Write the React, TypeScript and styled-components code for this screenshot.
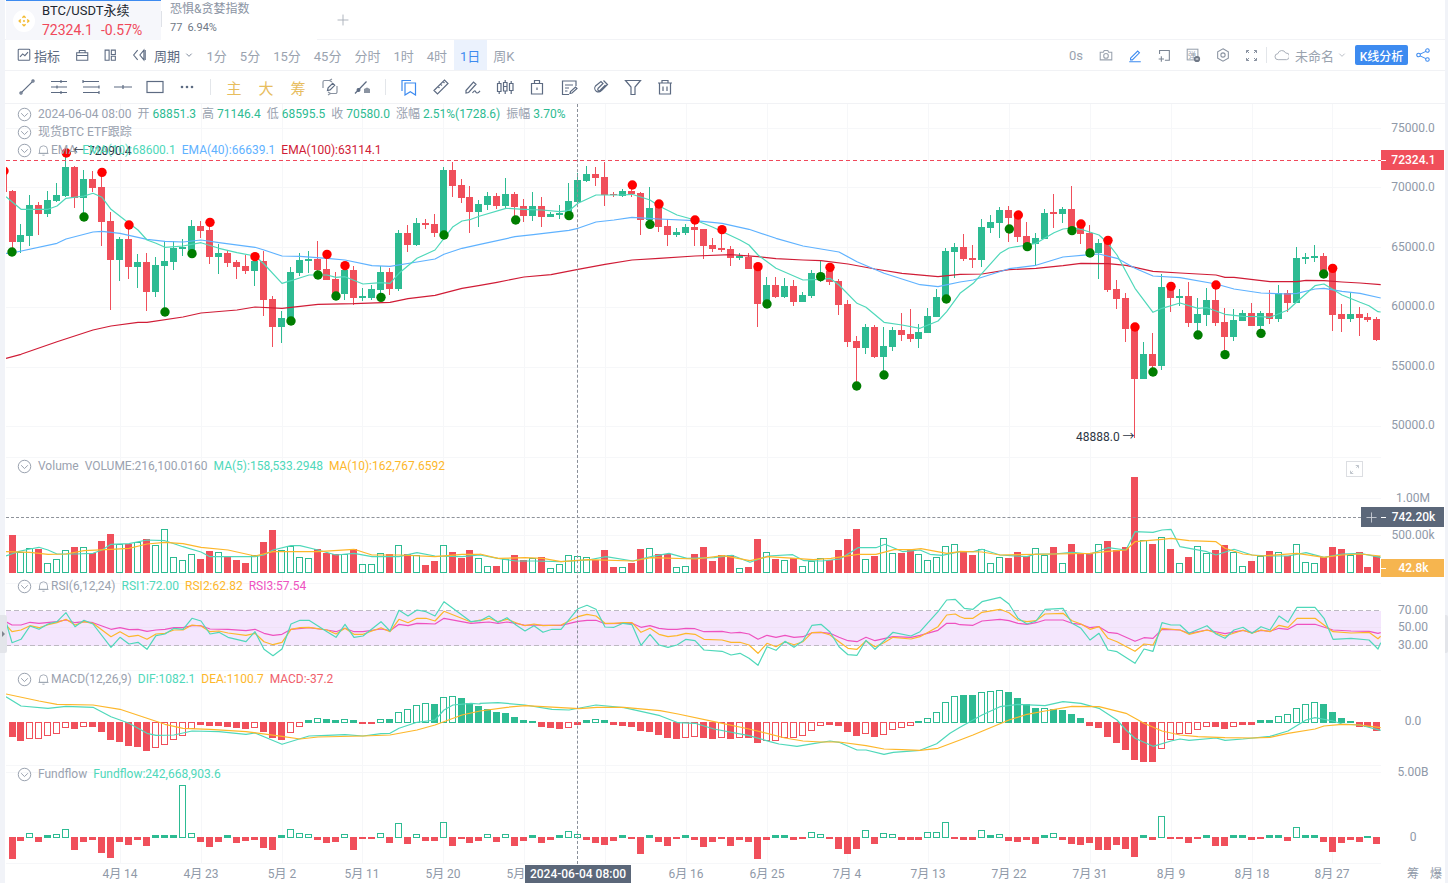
import React from 'react'
import styled, { createGlobalStyle } from 'styled-components'

const FONT = `Roboto, "Noto Sans CJK SC", sans-serif`
const RED = '#f04f5b'
const GREEN = '#2dbb92'
const TEAL = '#4fd8ba'
const ORANGE = '#fdb72b'
const PINK = '#ee52c0'
const BLUE = '#5fb2ff'
const WINE = '#d01c36'
const SLATE = '#5b6779'
const GRID = '#f6f7f9'

const GlobalStyle = createGlobalStyle`
  html, body { margin: 0; padding: 0; background: #fff; overflow: hidden; }
  body { font-family: ${FONT}; }
`

const Page = styled.div`
  display: flex;
  width: 1448px;
  height: 883px;
  overflow: hidden;
`

const Gutter = styled.div<{ $w: number }>`
  position: relative;
  flex: 0 0 ${p => p.$w}px;
  background: #f1f3f8;
`

const Handle = styled.div<{ $left: boolean }>`
  position: absolute;
  z-index: 3;
  top: 615px;
  ${p => (p.$left ? 'left: 0;' : 'right: 0;')}
  width: ${p => (p.$left ? 7 : 3)}px;
  height: 38px;
  background: #e3e5ea;
  border-radius: 0 2px 2px 0;
  display: flex;
  align-items: center;
  justify-content: center;
  &::after {
    content: '';
    display: ${p => (p.$left ? 'block' : 'none')};
    border-left: 3px solid #80858f;
    border-top: 3px solid transparent;
    border-bottom: 3px solid transparent;
  }
`

const Main = styled.div`
  flex: 1;
  min-width: 0;
  display: flex;
  flex-direction: column;
`

/* top tabs */
const Tabs = styled.div`
  display: flex;
  height: 40px;
  box-sizing: border-box;
  border-bottom: 1px solid #f2f3f6;
`

const ActiveTab = styled.div`
  margin-left: 1px;
  width: 155px;
  height: 40px;
  box-sizing: border-box;
  border-top: 1px solid #3d8bf0;
  background: #f6f7fb;
  display: flex;
  align-items: center;
  gap: 7px;
  padding-left: 7px;
`

const CoinLogo = styled.div`
  width: 22px;
  height: 22px;
  border-radius: 50%;
  background: #fff;
  display: flex;
  align-items: center;
  justify-content: center;
`

const TabText = styled.div`
  display: flex;
  flex-direction: column;
  margin-top: -1px;
`

const TabName = styled.div`
  font-size: 13px;
  line-height: 20px;
  color: #222831;
`

const TabPrice = styled.div`
  display: flex;
  gap: 8px;
  font-size: 14px;
  line-height: 18px;
  color: #f0485a;
`

const IndexTab = styled.div`
  width: 156px;
  padding: 1px 0 0 9px;
  box-sizing: border-box;
  background: #fff;
  margin-bottom: -1px;
  position: relative;
  &::before {
    content: '';
    position: absolute;
    left: 0;
    top: 11px;
    width: 1px;
    height: 16px;
    background: #dfe2e8;
  }
`

const IndexName = styled.div`
  font-size: 12px;
  line-height: 17px;
  color: #8b94a3;
`

const IndexValue = styled.div`
  display: flex;
  gap: 5px;
  margin-top: 1px;
  font-size: 11px;
  line-height: 18px;
  color: #6f7886;
`

const AddTab = styled.div`
  margin-left: 19px;
  width: 14px;
  height: 39px;
  display: flex;
  align-items: center;
`

/* toolbars */
const Toolbar = styled.div<{ $h: number }>`
  display: flex;
  align-items: center;
  height: ${p => p.$h}px;
  box-sizing: border-box;
  border-bottom: 1px solid #f1f2f5;
  background: #fff;
  padding-left: 6px;
`

const ToolText = styled.span<{ $dark?: boolean }>`
  font-size: 13px;
  color: ${p => (p.$dark ? '#5d6b82' : '#9aa3af')};
  white-space: nowrap;
`

const Period = styled.div<{ $on?: boolean }>`
  height: 30px;
  display: flex;
  align-items: center;
  padding: 0 6.5px;
  font-size: 13px;
  color: ${p => (p.$on ? '#3d8bf0' : '#9aa3af')};
  background: ${p => (p.$on ? '#ebf2fd' : 'transparent')};
`

const ToolSlot = styled.div<{ $w: number; $ml?: number }>`
  flex: 0 0 ${p => p.$w}px;
  margin-left: ${p => p.$ml || 0}px;
  display: flex;
  align-items: center;
  justify-content: center;
  height: 100%;
`

const ToolSep = styled.div<{ $w: number }>`
  flex: 0 0 1px;
  height: 16px;
  margin: 0 ${p => p.$w}px;
  background: #e3e6ea;
`

const Spacer = styled.div`
  flex: 1;
`

const AnalysisButton = styled.div`
  width: 53px;
  height: 20px;
  margin-left: 6px;
  border-radius: 2px;
  background: #3d8bf0;
  color: #fff;
  font-size: 12px;
  font-weight: 500;
  display: flex;
  align-items: center;
  justify-content: center;
`

const GoldMark = styled.span`
  font-size: 15px;
  color: #e7bd5e;
`

/* chart */
const ChartArea = styled.div`
  position: relative;
  flex: 1;
  min-height: 0;
`

const Pane = styled.div<{ $h: number }>`
  position: relative;
  height: ${p => p.$h}px;
`

const PaneSvg = styled.svg`
  display: block;
  width: 1440px;
  height: 100%;
`

const AxisLabel = styled.text`
  font-family: ${FONT};
  font-size: 12px;
  fill: #8f99a8;
  text-anchor: middle;
  dominant-baseline: central;
`

const LowLabel = styled.text`
  font-family: ${FONT};
  font-size: 12px;
  fill: #2d3644;
  dominant-baseline: central;
`

const Legend = styled.div`
  position: absolute;
  z-index: 1;
  top: 0;
  left: 12px;
  display: flex;
  flex-direction: column;
`

const LegendTop = styled(Legend)`
  top: 1px;
`

const LegendRow = styled.div`
  display: flex;
  align-items: center;
  height: 18px;
  gap: 6px;
  font-size: 12px;
  line-height: 18px;
  color: #9aa2af;
  white-space: nowrap;
`

const BellLabel = styled.span`
  display: flex;
  align-items: center;
  gap: 1px;
  margin-left: -1px;
`

const Value = styled.span<{ $c: string }>`
  color: ${p => p.$c};
`

const CrossV = styled.div`
  position: absolute;
  z-index: 2;
  top: 0;
  bottom: 19px;
  left: 572px;
  border-left: 1px dashed #8a8f99;
`

const CrossH = styled.div`
  position: absolute;
  z-index: 2;
  top: 413px;
  left: 1px;
  width: 1375px;
  border-top: 1px dashed #8f939b;
`

const PriceTag = styled.div<{ $top: number; $h: number; $bg: string }>`
  position: absolute;
  z-index: 2;
  top: ${p => p.$top}px;
  left: 1376px;
  width: 63px;
  height: ${p => p.$h}px;
  background: ${p => p.$bg};
  color: #fff;
  font-size: 12px;
  font-weight: 500;
  display: flex;
  align-items: center;
  justify-content: center;
  padding-left: 2px;
  box-sizing: border-box;
  &::before {
    content: '';
    position: absolute;
    left: 0;
    top: 50%;
    width: 5px;
    height: 1px;
    background: #fff;
  }
`

const PlusBox = styled.div`
  position: absolute;
  z-index: 2;
  top: 403px;
  left: 1356px;
  width: 20px;
  height: 20px;
  background: ${SLATE};
  display: flex;
  align-items: center;
  justify-content: center;
`

const ExpandBox = styled.div`
  position: absolute;
  z-index: 2;
  top: 357px;
  left: 1341px;
  width: 17px;
  height: 16px;
  box-sizing: border-box;
  border: 1px solid #dcdee2;
  display: flex;
  align-items: center;
  justify-content: center;
`

const DateTag = styled.div`
  position: absolute;
  z-index: 3;
  bottom: 0;
  left: 520px;
  width: 106px;
  height: 18px;
  background: ${SLATE};
  color: #fff;
  font-size: 12px;
  font-weight: 500;
  display: flex;
  align-items: center;
  justify-content: center;
`

/* icons */
const IconSvg = styled.svg<{ $c: string }>`
  display: block;
  fill: none;
  stroke: ${p => p.$c};
  stroke-width: 1.2;
`

const Icon = ({ d, c = '#5d6b82', s = 18, w = 18 }: { d: React.ReactNode; c?: string; s?: number; w?: number }) => (
  <IconSvg $c={c} width={(s * w) / 18} height={s} viewBox={`0 0 ${w} 18`}>
    {d}
  </IconSvg>
)

const glyphs = {
  indicator: (
    <>
      <rect x="2.5" y="2.5" width="13" height="12.5" rx="1" />
      <path d="M4.5 11l3-3.2 2.5 2 3.5-4" />
    </>
  ),
  calendar: <path d="M3 6.5h12.5v8.5H3zM3 9.5h12.5M6 6.5V4h6.5v2.5" />,
  layout: <path d="M3.5 3.5H8v11.5H3.5zM10.5 3.5H15v5h-4.5zM10.5 10.5H15V15h-4.5z" />,
  rewind: <path d="M7.5 3.5L3 9l4.5 5.5M14.5 3.5L10 9l4.5 5.5zM16 3.5v11" />,
  chevron: <path d="M5 7l4 4 4-4" />,
  camera: (
    <>
      <path d="M2.5 6h3.5l1-2h4l1 2h3.5v8.5h-13z" />
      <circle cx="9" cy="10" r="2.6" />
    </>
  ),
  pen: <path d="M4 12.5L12 4.5l2 2-8 8H4zM2.5 16.5h13" />,
  frame: <path d="M4 8V4h11v11h-5M3 13.5h6M6 10.5v6" />,
  pop: (
    <>
      <rect x="2.5" y="2.5" width="12" height="12" />
      <text x="3.5" y="12" fontSize="9" stroke="none" fill="#9aa3af">
        弹
      </text>
      <circle cx="13.5" cy="13.5" r="3.5" fill="#6f7886" stroke="none" />
      <path d="M12 13.5h3" stroke="#fff" />
    </>
  ),
  hex: (
    <>
      <path d="M9 2l6 3.5v7L9 16l-6-3.5v-7z" />
      <circle cx="9" cy="9" r="2.4" />
    </>
  ),
  full: <path d="M3 6V3h3M3 3l3 3M12 3h3v3M15 3l-3 3M15 12v3h-3M15 15l-3-3M6 15H3v-3M3 15l3-3" />,
  cloud: <path d="M5 14a3.6 3.6 0 01-.4-7.2A5 5 0 0114 6a4 4 0 011 8z" />,
  share: (
    <>
      <circle cx="14" cy="4" r="2" />
      <circle cx="4" cy="9" r="2" />
      <circle cx="14" cy="14" r="2" />
      <path d="M5.8 8l6.4-3.1M5.8 10l6.4 3.1" />
    </>
  ),
  trend: (
    <>
      <path d="M3.8 14.2L14.2 3.8" />
      <circle cx="3" cy="15" r="1.1" />
      <circle cx="15" cy="3" r="1.1" />
    </>
  ),
  fib: <path d="M1 3.5h16M1 9h16M1 14.5h16M11 2v3M7 7.5v3M11 13v3" />,
  channel: <path d="M1 3.5h16M1 9h16M1 14.5h16M1 2v3M17 7.5v3M17 13v3" />,
  hline: <path d="M0 9h18M9 7v4" />,
  rect: <rect x="1" y="3.5" width="16" height="11" />,
  dots: (
    <g fill="#5d6b82" stroke="none">
      <circle cx="4" cy="9" r="1.3" />
      <circle cx="9" cy="9" r="1.3" />
      <circle cx="14" cy="9" r="1.3" />
    </g>
  ),
  cyclePen: (
    <>
      <path d="M8 2.5H3.5a1.5 1.5 0 00-1.5 1.5v6M10 15.5h4.5A1.5 1.5 0 0016 14V8M11 1l-2.5 1.5L11 4M7 14l2.5 1.5L7 17" stroke="#8a93a1" />
      <path d="M6.5 12.5l.6-2.6 4.6-4.6 2 2-4.6 4.6z" />
    </>
  ),
  linePin: (
    <>
      <path d="M2 15.5L13.5 3.5" />
      <circle cx="5.5" cy="12" r="1.4" fill="#5d6b82" />
      <path d="M11 11l3-1.6 3 1.6v4h-6z" fill="#8a93a1" stroke="none" />
    </>
  ),
  marks: <path d="M2 13V2.5h9M5 5h10.5v12l-5.2-3.2L5 17z" />,
  ruler: <path d="M2 12.5L12.5 2 16 5.5 5.5 16zM6 8.500l1.500 1.500M8.500 6l1.500 1.500M11 3.500l1.500 1.500" />,
  penWave: <path d="M2 12.500L9.500 4l2.500 2.200L4.600 14.500 2 15zM8.500 15c1.500-2.500 2.500-2.500 3.300-1 .8 1.500 2 1.500 4.200-1.200" />,
  candles: <path d="M1.500 5.500h3.500v8H1.500zM3.200 3v2.500M3.200 13.500V16M7.500 4.500H11v8.500H7.500zM9.200 2v2.500M9.200 13v3M13.500 5.500H17v7h-3.500zM15.200 3v2.500M15.200 12.500V16M7.500 8.500H11" />,
  tag: <path d="M3.500 5.500h11v10.500h-11zM6.500 5.500V2.500h5v3M9 9.500v2.500" />,
  note: <path d="M16 8V3H2.500v13.500H9M5 7h8M5 10h4M5 13h2.500M10 15.500l.5-2 5-4.500 1.500 1.500-5 4.500z" />,
  magnet: <path d="M11.500 2.500l4 4-6 6a3.700 3.700 0 01-6-4.500L9 3.500l2 2-5 5c-1 1.500 1 3 2 2l5.500-5.500" />,
  funnel: <path d="M1.500 2.500h15L11 9v7.500H7V9zM4.500 2.500h9" />,
  trash: <path d="M2 5h14M6 5V2.500h6V5M3.500 5v11h11V5M7 8.500v4.500M11 8.500v4.500" />,
  bell: <path d="M3.500 13V8a5.500 5.500 0 0111 0v5zM2 13h14M7.500 15.500h3" />,
  circleDown: (
    <>
      <circle cx="9" cy="9" r="7.500" />
      <path d="M5 7.500l4 4 4-4" />
    </>
  ),
  corners: <path d="M11 2.500h4.500V7M2.500 11v4.500H7M15 3l-3 3M3 15l3-3" />,
  plus: <path d="M9 2v14M2 9h14" />,
}

const Collapse = () => <Icon d={glyphs.circleDown} c="#9aa2af" s={15} />
const Bell = () => <Icon d={glyphs.bell} c="#9aa2af" s={13} />

/* candle data, read off at 3x: colour, wick top, body top, body bottom, wick bottom; y = 160 + v / 3 */
type Side = 'R' | 'G'
type Candle = [Side, number, number, number, number]
const candles: Candle[] = [
  ['R',90,93,245,270],['G',192,225,245,278],['G',105,135,227,258],['R',125,135,162,225],['G',93,120,162,172],
  ['G',68,105,123,125],['G',-15,21,108,110],['R',18,21,114,145],['G',30,57,114,160],['R',33,57,84,96],
  ['R',40,81,186,258],['R',155,183,300,450],['G',230,237,300,362],['R',195,237,321,358],['G',282,306,321,384],
  ['R',280,306,396,452],['G',292,315,396,410],['G',244,303,318,450],['G',244,264,306,330],['G',238,261,267,288],
  ['G',180,198,270,285],['R',183,198,213,234],['R',195,210,291,312],['G',252,279,291,342],['R',270,279,309,322],
  ['R',300,306,321,356],['R',285,318,333,342],['G',285,303,333,378],['R',272,303,420,468],['R',408,417,501,562],
  ['G',452,474,501,548],['G',320,336,480,490],['G',278,300,339,348],['G',273,297,303,338],['R',243,297,330,345],
  ['R',290,327,360,360],['R',335,357,408,420],['G',320,330,402,420],['R',318,330,414,435],['G',385,408,414,424],
  ['G',375,387,414,420],['G',318,336,390,420],['R',325,336,387,405],['G',210,219,387,392],['R',195,219,255,276],
  ['G',175,189,255,258],['R',178,189,195,207],['R',162,192,219,232],['G',22,30,228,240],['R',5,30,78,112],
  ['R',57,75,114,128],['R',78,111,156,218],['G',120,132,156,202],['G',96,108,135,150],['R',100,108,138,148],
  ['G',55,102,138,145],['R',96,102,141,172],['R',118,138,168,185],['G',97,138,168,183],['R',112,138,171,200],
  ['G',155,162,171,172],['G',135,159,165,178],['G',68,123,158,175],['G',40,60,126,128],['G',17,42,63,65],
  ['R',22,42,54,78],['R',5,51,105,138],['R',97,102,105,110],['G',87,93,108,110],['R',75,93,102,110],
  ['R',96,99,180,225],['G',82,144,180,190],['R',130,138,201,215],['R',177,198,225,258],['G',205,216,225,232],
  ['G',192,201,219,224],['R',180,201,210,258],['R',207,207,258,296],['R',235,255,267,275],['R',210,264,270,275],
  ['R',258,267,294,318],['G',278,288,294,300],['R',280,291,327,327],['R',320,321,432,502],['G',352,375,425,432],
  ['R',352,375,411,414],['G',355,378,411,414],['R',360,378,426,438],['G',395,405,426,426],['G',330,339,408,414],
  ['G',303,339,355,365],['R',323,333,366,375],['R',358,363,435,464],['R',420,432,546,560],['R',528,543,564,680],
  ['G',492,501,564,582],['R',495,501,591,594],['G',502,558,591,645],['G',500,510,561,573],['R',458,510,525,542],
  ['R',447,522,537,545],['G',492,516,537,564],['G',444,468,519,520],['G',388,411,471,472],['G',265,273,414,418],
  ['G',248,261,276,354],['R',222,261,297,302],['R',255,294,300,324],['G',177,201,300,322],['G',165,186,204,218],
  ['G',140,150,189,234],['R',137,150,174,245],['R',165,165,231,245],['R',186,228,258,270],['G',220,234,253,315],
  ['G',147,159,237,237],['R',103,156,161,203],['G',142,147,161,188],['R',78,147,204,210],['R',180,192,222,252],
  ['R',196,219,282,290],['G',238,250,280,357],['R',240,240,390,396],['R',361,387,417,446],['R',400,414,507,545],
  ['R',490,492,656,835],['G',546,582,656,656],['R',520,582,618,636],['G',342,381,618,630],['R',370,379,414,456],
  ['G',388,408,414,438],['R',366,408,489,500],['G',415,462,489,525],['G',384,420,465,497],['R',375,420,489,498],
  ['R',445,486,531,584],['G',448,480,531,543],['G',450,459,483,483],['R',430,459,498,498],['G',452,459,498,520],
  ['R',390,459,477,492],['G',375,399,477,485],['R',390,399,429,455],['G',260,294,429,430],['G',280,291,297,312],
  ['G',254,288,294,305],['R',280,288,342,342],['R',326,330,465,512],['R',432,462,477,517],['G',397,462,477,486],
  ['R',442,462,474,527],['R',460,471,480,486],['R',472,477,540,542],
]

/* absolute x of the markers is offset + v / 3 */
const dotsGreen: [number, number[]][] = [
  [0, [36,276,252,171,495,456,576,281,873,483,954,345,1008,408,1143,412,1332,225]],
  [480, [107,180,267,167,510,193,861,432,1022,350,1130,678,1212,645,1399,417]],
  [960, [148,207,202,260,336,212,390,279,579,636,714,525,795,584,903,520,1091,342]],
]
const dotsRed: [number, number[]][] = [
  [0, [12,33,199,-21,306,37,387,195,630,187,765,290,981,283,1035,317]],
  [480, [457,75,537,132,645,180,726,209,834,320,1050,322]],
  [960, [175,165,363,192,444,241,525,501,633,379,768,375,1118,325]],
]

const ema10: [number, number[]][] = [
  [0, [18,110,36,125,63,148,90,148,144,148,171,138,198,115,252,108,279,100,306,112,333,148,387,190,414,210,441,240,468,250,495,262,549,258,603,248,657,265,711,278,765,288,792,312,846,370,873,362,927,345,981,345,1008,352,1035,350,1089,372,1143,368,1170,370,1197,340,1251,295,1305,270,1332,235,1359,200,1386,183,1413,178,1440,168]],
  [480, [0,168,78,145,132,148,186,150,240,155,267,152,294,130,348,105,429,105,456,103,510,120,537,138,591,165,645,180,699,202,780,240,807,255,834,285,888,325,969,360,1023,358,1050,355,1077,375,1131,430,1158,442,1212,487,1266,495,1320,505,1374,483,1400,455,1440,400]],
  [960, [0,400,40,370,66,340,120,280,147,264,200,255,228,250,282,218,309,207,336,204,363,208,417,225,444,250,471,285,525,385,579,457,606,445,660,429,714,445,741,443,795,463,849,469,903,470,930,472,984,450,1011,425,1065,377,1092,372,1146,405,1200,427,1227,437,1254,455,1262,456]],
]
const ema40: [number, number[]][] = [
  [0, [18,280,36,279,171,250,198,237,279,216,306,214,360,220,441,238,495,244,549,246,603,240,657,248,765,262,792,270,846,288,900,289,981,295,1035,300,1116,317,1170,319,1251,306,1305,297,1332,283,1386,265,1440,253]],
  [480, [0,253,105,230,160,224,267,211,294,205,348,186,402,180,456,172,537,177,645,182,726,190,807,208,888,235,969,258,1077,276,1131,305,1212,340,1320,374,1374,380,1440,366]],
  [960, [0,366,40,360,147,326,228,316,309,291,390,284,417,282,471,295,525,325,579,348,660,353,768,372,822,387,903,399,984,402,1011,400,1065,387,1092,385,1146,394,1200,400,1262,414]],
]
const ema100: [number, number[]][] = [
  [0, [18,595,63,583,171,545,279,510,333,498,414,487,441,487,549,471,603,459,711,450,765,441,846,445,954,433,1062,431,1170,427,1224,416,1305,406,1386,385,1440,376]],
  [480, [0,376,51,367,132,351,213,344,294,328,375,313,456,300,537,295,645,288,753,284,834,290,888,296,969,300,1023,302,1104,312,1185,327,1266,340,1374,350,1440,343]],
  [960, [0,343,66,342,147,329,228,325,309,317,363,310,444,311,498,316,579,334,660,339,768,345,795,352,822,352,930,365,1011,365,1038,361,1092,362,1146,366,1200,369,1262,374]],
]

/* bar tops, y = 450 + v / 3 */
const volumes = [
  255,306,295,297,340,328,301,291,291,309,273,252,282,282,276,267,285,238,322,331,313,327,303,307,321,330,339,316,276,240,300,288,322,325,297,309,312,312,297,343,343,310,312,286,313,316,345,333,286,306,324,300,325,
  349,348,328,315,330,325,321,355,343,316,319,322,330,300,351,352,339,297,295,312,312,352,349,312,291,333,316,315,355,351,267,307,327,331,325,349,334,325,331,300,267,237,328,318,265,310,309,301,313,331,322,289,283,
  303,316,298,340,322,324,306,319,295,316,291,340,282,310,310,283,273,300,291,81,271,282,262,297,340,321,287,310,300,285,306,349,333,319,303,307,318,283,337,340,322,291,297,316,306,351,318,
]
const ma5: [number, number[]][] = [
  [0, [18,318,54,305,90,297,117,292,144,300,171,312,225,312,279,310,306,300,333,283,387,281,441,270,495,272,549,290,603,306,630,320,711,320,765,320,792,315,819,300,873,287,900,287,954,300,1008,315,1062,310,1116,320,1197,320,1251,308,1305,318,1386,320,1440,315]],
  [480, [0,315,54,325,108,333,162,333,243,335,324,330,378,320,459,333,513,320,567,310,621,325,702,323,756,316,810,337,864,318,938,314,972,332,1026,333,1080,327,1134,293,1188,293,1215,283,1269,305,1320,300,1350,313,1386,316,1440,305]],
  [960, [0,305,40,305,66,298,120,315,200,320,228,312,282,312,336,307,390,312,444,293,498,300,525,245,579,247,606,240,633,238,660,290,741,305,768,315,822,298,876,315,930,318,984,318,1038,308,1092,322,1146,312,1200,310,1262,322]],
]
const ma10: [number, number[]][] = [
  [0, [18,305,90,307,144,313,198,312,252,302,333,298,387,295,441,282,495,277,549,281,603,292,684,300,765,318,819,305,900,305,954,305,1062,298,1116,315,1197,315,1305,320,1386,313,1440,313]],
  [480, [0,312,54,325,135,323,189,325,243,335,324,329,459,333,513,323,648,327,729,317,810,332,864,320,945,325,1000,329,1053,325,1134,313,1188,313,1242,299,1296,299,1323,296,1400,310,1440,305]],
  [960, [0,304,66,306,120,315,282,312,390,310,444,304,498,300,525,275,606,268,633,265,687,272,768,275,795,295,849,312,903,318,1011,310,1092,322,1146,315,1200,312,1262,318]],
]

const rsi1: [number, number[]][] = [
  [0, [18,515,36,578,63,568,90,528,117,538,144,522,171,515,198,488,225,530,252,511,279,522,333,592,360,562,387,582,414,577,441,598,468,557,495,552,522,535,549,538,576,505,603,513,630,552,657,547,684,562,738,575,765,545,792,598,819,617,846,597,873,522,900,511,927,511,981,545,1008,562,1035,523,1062,562,1089,558,1143,515,1170,543,1197,481,1224,498,1251,480,1278,485,1305,498,1332,455,1413,515,1440,512]],
  [480, [0,512,27,498,54,517,81,503,108,525,135,543,162,527,189,547,216,538,243,538,294,476,321,466,348,478,375,531,402,532,429,520,456,524,483,586,510,553,537,585,564,592,591,585,618,568,645,572,672,600,726,604,753,615,780,610,807,625,834,646,861,590,888,601,915,574,942,592,969,572,996,526,1023,523,1050,546,1077,590,1104,614,1131,616,1158,571,1185,598,1212,573,1239,547,1293,558,1320,545,1374,485,1400,450,1426,448,1440,462]],
  [960, [0,462,13,475,39,478,66,455,120,442,147,462,174,505,201,522,228,513,255,478,309,475,336,520,363,535,390,570,417,550,444,600,471,605,525,640,552,597,579,604,606,518,633,525,660,525,687,550,741,527,768,552,795,565,822,540,849,532,876,550,903,530,930,540,957,498,984,517,1011,472,1065,472,1092,505,1119,568,1173,565,1227,570,1254,597,1262,578]],
]
const rsi2: [number, number[]][] = [
  [0, [18,525,36,545,63,540,90,527,117,533,144,524,171,518,198,508,225,525,252,515,279,520,333,560,360,545,387,560,414,556,441,568,468,552,495,550,522,540,549,540,576,525,603,528,630,545,657,543,684,549,738,556,765,550,792,575,819,584,846,577,873,538,900,533,927,532,981,540,1008,552,1035,535,1062,553,1089,553,1143,533,1170,545,1197,508,1224,518,1251,505,1278,505,1305,513,1332,484,1413,516,1440,510]],
  [480, [0,512,27,505,54,515,81,508,108,518,135,527,162,522,189,527,243,525,294,500,321,493,348,498,375,520,402,520,429,518,456,518,483,547,510,535,537,553,564,560,591,557,618,550,645,553,672,568,726,570,753,577,780,577,807,585,834,610,861,580,888,590,915,575,942,584,969,575,996,548,1023,547,1050,555,1077,575,1104,595,1131,598,1158,573,1185,590,1212,578,1239,562,1293,567,1320,560,1374,530,1400,495,1426,492,1440,500]],
  [960, [0,500,13,505,39,505,66,487,120,478,147,488,174,510,201,515,228,512,255,492,309,490,336,512,363,522,390,538,417,530,444,565,471,575,525,604,552,582,579,585,606,535,660,540,687,553,741,540,795,558,849,541,876,550,903,540,930,545,957,526,984,532,1011,505,1065,505,1119,545,1173,549,1227,547,1254,566,1262,559]],
]
const rsi3: [number, number[]][] = [
  [0, [18,515,36,525,63,525,90,517,117,520,171,515,198,510,225,518,252,515,279,518,333,538,360,533,387,539,414,538,441,544,468,540,495,538,522,533,549,533,576,527,603,527,630,537,684,538,738,542,765,538,792,550,819,556,846,553,873,538,927,533,981,540,1008,545,1035,535,1062,545,1089,545,1143,537,1170,542,1197,523,1224,527,1251,520,1278,521,1305,522,1332,505,1413,520,1440,518]],
  [480, [0,518,27,516,54,520,81,516,108,520,135,526,162,525,189,526,243,526,294,514,321,511,348,511,375,521,429,520,456,520,483,532,510,527,537,535,564,538,591,538,618,535,645,536,672,545,726,544,753,549,780,547,807,552,834,568,861,556,888,562,915,556,942,562,969,560,996,548,1023,547,1050,550,1077,562,1104,572,1131,575,1158,562,1185,572,1212,566,1239,560,1293,562,1320,556,1374,541,1400,520,1426,520,1440,524]],
  [960, [0,524,39,526,66,513,120,508,147,512,174,520,201,523,228,518,255,510,309,510,336,520,363,523,390,533,417,530,444,547,471,550,525,574,552,563,579,565,606,538,660,540,687,550,741,540,795,551,849,541,876,548,903,541,930,544,957,535,984,538,1011,523,1065,523,1119,540,1173,543,1227,544,1254,550,1262,548]],
]

/* y = 665 + |v| / 3, a negative value is a hollow bar */
const macd = [
  213,225,-218,-218,-209,-203,-185,189,-182,183,198,222,228,240,243,255,-246,-237,-222,-209,-188,176,180,180,183,186,189,-185,198,216,222,-200,-182,165,-159,162,165,-163,165,174,173,-163,162,-141,-132,-120,-115,117,-97,-93,99,115,122,
  132,141,144,156,165,168,183,186,189,-185,177,165,-162,165,177,180,183,195,198,207,216,219,-215,-213,216,219,-216,219,-215,216,231,-225,-224,-217,-215,-210,-194,-180,177,180,198,210,-203,213,-206,-193,-187,-181,168,-160,-142,-112,-93,
  90,90,-82,-78,-75,81,99,117,129,-129,132,135,147,159,179,185,213,231,252,282,288,288,-248,-223,-205,-203,-193,-182,183,188,-182,176,176,165,165,-154,-148,-130,-118,-112,117,141,159,168,183,183,196,
]
const dif: [number, number[]][] = [
  [0, [18,95,63,123,144,130,198,124,279,127,333,155,387,175,441,205,468,211,522,210,576,198,657,200,738,208,765,204,846,238,927,213,981,211,1035,209,1089,213,1143,206,1170,205,1197,190,1251,172,1305,165,1332,135,1359,120,1413,115,1440,117]],
  [480, [0,115,54,113,135,120,216,133,267,135,348,120,432,128,540,152,594,173,645,175,702,192,807,212,870,230,897,237,951,244,1000,236,1050,228,1077,232,1131,255,1158,255,1212,268,1240,262,1320,256,1370,236,1410,205,1440,187]],
  [960, [0,187,66,150,120,125,174,118,255,122,309,110,363,115,417,130,471,165,498,195,525,220,579,244,633,228,660,222,687,226,768,219,795,226,849,222,930,214,984,198,1038,165,1065,158,1119,168,1146,177,1200,180,1262,196]],
]
const dea: [number, number[]][] = [
  [0, [18,87,117,108,171,118,279,120,360,133,441,160,495,178,549,190,630,193,738,200,846,214,900,222,954,216,1089,213,1170,210,1251,195,1305,180,1386,150,1440,138]],
  [480, [0,138,81,127,135,122,243,128,297,131,351,127,432,127,540,137,594,147,702,170,807,192,861,205,915,219,969,228,1023,231,1077,231,1158,242,1212,252,1266,254,1320,256,1374,250,1440,225]],
  [960, [0,225,39,210,147,165,201,148,255,138,336,124,417,125,498,145,552,175,606,198,660,210,714,215,795,218,876,219,930,217,984,205,1065,192,1092,183,1146,178,1200,180,1262,188]],
]

/* same scale as macd, hollow bars negative */
const fundflow = [
  580,525,-505,528,511,-508,-492,552,528,522,561,576,528,537,522,540,510,510,510,-361,-505,528,543,528,510,531,525,522,546,552,510,-492,-505,-507,522,531,528,-508,552,519,519,-505,531,-475,534,-508,525,525,-472,540,519,531,525,
  -508,528,-508,540,525,511,531,522,511,-498,-508,522,531,537,525,510,519,564,510,528,540,519,510,522,543,528,519,540,522,528,579,522,510,510,522,519,-502,-508,519,549,564,549,-496,534,-505,-508,522,522,522,-500,-500,-472,520,
  523,522,-496,510,-508,525,528,522,534,510,-505,522,534,537,531,552,552,537,549,573,510,522,-454,519,519,531,519,510,540,540,510,510,522,519,510,510,525,-487,510,510,528,558,531,522,528,513,534,
]

const xAt = (i: number) => 12 + 8.98 * i
const barLeft = (i: number) => Math.round(xAt(i) - 3.5)
const sideColor = (s: Side) => (s === 'R' ? RED : GREEN)
const gridXs = [120, 201, 282, 362, 443, 524, 605, 686, 767, 847, 928, 1009, 1090, 1171, 1252, 1332]

const pathOf = (segs: [number, number[]][], y0: number) => {
  const out: string[] = []
  segs.forEach(([x0, vals]) => {
    for (let k = 0; k < vals.length; k += 2) {
      out.push(`${(x0 + vals[k] / 3).toFixed(1)},${(y0 + vals[k + 1] / 3).toFixed(1)}`)
    }
  })
  return 'M' + out.join('L')
}

const Trace = ({ segs, y0, color }: { segs: [number, number[]][]; y0: number; color: string }) => (
  <path d={pathOf(segs, y0)} fill="none" stroke={color} strokeWidth={1.2} strokeLinejoin="round" />
)

const Grid = ({ top, h, rows }: { top: number; h: number; rows: number[] }) => (
  <g stroke={GRID} strokeWidth={1} shapeRendering="crispEdges">
    {gridXs.map(x => (
      <line key={x} x1={x + 0.5} x2={x + 0.5} y1={top} y2={top + h} />
    ))}
    {rows.map(y => (
      <line key={y} x1={6} x2={1381} y1={y + 0.5} y2={y + 0.5} />
    ))}
  </g>
)

const Bar = ({ i, a, b, color, hollow }: { i: number; a: number; b: number; color: string; hollow: boolean }) => {
  const t = Math.round(Math.min(a, b))
  const h = Math.max(1, Math.round(Math.abs(a - b)))
  return hollow ? (
    <rect x={barLeft(i) + 0.5} y={t + 0.5} width={6} height={h} fill="none" stroke={color} shapeRendering="crispEdges" />
  ) : (
    <rect x={barLeft(i)} y={t} width={7} height={h + 1} fill={color} shapeRendering="crispEdges" />
  )
}

const Dots = ({ sets, fill }: { sets: [number, number[]][]; fill: string }) => (
  <>
    {sets.flatMap(([x0, vals]) =>
      vals
        .filter((_, k) => k % 2 === 0)
        .map((v, k) => <circle key={`${x0}-${k}`} cx={x0 + v / 3} cy={160 + vals[k * 2 + 1] / 3} r={4.7} fill={fill} />)
    )}
  </>
)

const Clip = ({ id, top, h }: { id: string; top: number; h: number }) => (
  <clipPath id={id}>
    <rect x={6} y={top} width={1375} height={h} />
  </clipPath>
)

const MainPane = () => (
  <Pane $h={353}>
    <PaneSvg viewBox="5 104 1440 353">
      <Grid top={104} h={353} rows={[128, 187, 247, 307, 367, 426]} />
      <Clip id="main-clip" top={104} h={353} />
      <g clipPath="url(#main-clip)">
        {candles.map(([side, wt, bt, bb, wb], i) => {
          const y = (v: number) => Math.round(160 + v / 3)
          const left = barLeft(i)
          const fill = sideColor(side)
          return (
            <g key={i} fill={fill} shapeRendering="crispEdges">
              <rect x={left + 3} y={y(wt)} width={1} height={Math.max(1, y(wb) - y(wt))} />
              <rect x={left} y={y(bt)} width={7} height={Math.max(1, y(bb) - y(bt))} />
            </g>
          )
        })}
        <rect x={6} y={175} width={1} height={17} fill={RED} />
        <Trace segs={ema100} y0={160} color={WINE} />
        <Trace segs={ema40} y0={160} color={BLUE} />
        <Trace segs={ema10} y0={160} color={TEAL} />
        <Dots sets={dotsGreen} fill="#007d00" />
        <Dots sets={dotsRed} fill="#ff0000" />
      </g>
      <line x1={6} x2={1381} y1={160.5} y2={160.5} stroke="#f0485a" strokeDasharray="4 3" />
      <LowLabel x={1076} y={437}>48888.0 →</LowLabel>
      <LowLabel x={73} y={151} fill="#555">← 72090.4</LowLabel>
      {[[75000, 128], [70000, 187], [65000, 247], [60000, 306], [55000, 366], [50000, 425]].map(([v, y]) => (
        <AxisLabel key={v} x={1413} y={y}>{v}.0</AxisLabel>
      ))}
    </PaneSvg>
    <LegendTop>
      <LegendRow>
        <Collapse />
        <span>2024-06-04 08:00</span>
        <span>开 <Value $c={GREEN}>68851.3</Value></span>
        <span>高 <Value $c={GREEN}>71146.4</Value></span>
        <span>低 <Value $c={GREEN}>68595.5</Value></span>
        <span>收 <Value $c={GREEN}>70580.0</Value></span>
        <span>涨幅 <Value $c={GREEN}>2.51%(1728.6)</Value></span>
        <span>振幅 <Value $c={GREEN}>3.70%</Value></span>
      </LegendRow>
      <LegendRow>
        <Collapse />
        <span>现货BTC ETF跟踪</span>
      </LegendRow>
      <LegendRow>
        <Collapse />
        <BellLabel><Bell />EMA</BellLabel>
        <Value $c={TEAL}>EMA(10):68600.1</Value>
        <Value $c={BLUE}>EMA(40):66639.1</Value>
        <Value $c={WINE}>EMA(100):63114.1</Value>
      </LegendRow>
    </LegendTop>
  </Pane>
)

const VolumePane = () => (
  <Pane $h={120}>
    <PaneSvg viewBox="5 457 1440 120">
      <Grid top={457} h={120} rows={[457, 498, 535]} />
      <Clip id="vol-clip" top={457} h={120} />
      <g clipPath="url(#vol-clip)">
        {volumes.map((v, i) => (
          <Bar key={i} i={i} a={450 + v / 3} b={572} color={sideColor(candles[i][0])} hollow={candles[i][0] === 'G'} />
        ))}
        <Trace segs={ma5} y0={450} color={TEAL} />
        <Trace segs={ma10} y0={450} color={ORANGE} />
      </g>
      <AxisLabel x={1413} y={498}>1.00M</AxisLabel>
      <AxisLabel x={1413} y={535}>500.00k</AxisLabel>
    </PaneSvg>
    <Legend>
      <LegendRow>
        <Collapse />
        <span>Volume</span>
        <span>VOLUME:216,100.0160</span>
        <Value $c={TEAL}>MA(5):158,533.2948</Value>
        <Value $c={ORANGE}>MA(10):162,767.6592</Value>
      </LegendRow>
    </Legend>
  </Pane>
)

const RsiPane = () => (
  <Pane $h={93}>
    <PaneSvg viewBox="5 577 1440 93">
      <Grid top={577} h={93} rows={[583]} />
      <rect x={6} y={611} width={1375} height={35} fill="#f4e6fd" />
      <line x1={6} x2={1381} y1={627.5} y2={627.5} stroke="#efe2f6" />
      <g stroke="#bdb9c2" strokeDasharray="5 3">
        <line x1={6} x2={1381} y1={610.5} y2={610.5} />
        <line x1={6} x2={1381} y1={645.5} y2={645.5} />
      </g>
      <Clip id="rsi-clip" top={577} h={93} />
      <g clipPath="url(#rsi-clip)">
        <Trace segs={rsi3} y0={450} color={PINK} />
        <Trace segs={rsi2} y0={450} color={ORANGE} />
        <Trace segs={rsi1} y0={450} color={TEAL} />
      </g>
      <AxisLabel x={1413} y={610}>70.00</AxisLabel>
      <AxisLabel x={1413} y={627}>50.00</AxisLabel>
      <AxisLabel x={1413} y={645}>30.00</AxisLabel>
    </PaneSvg>
    <Legend>
      <LegendRow>
        <Collapse />
        <BellLabel><Bell />RSI(6,12,24)</BellLabel>
        <Value $c={TEAL}>RSI1:72.00</Value>
        <Value $c={ORANGE}>RSI2:62.82</Value>
        <Value $c={PINK}>RSI3:57.54</Value>
      </LegendRow>
    </Legend>
  </Pane>
)

const MacdPane = () => (
  <Pane $h={95}>
    <PaneSvg viewBox="5 670 1440 95">
      <Grid top={670} h={95} rows={[670]} />
      <Clip id="macd-clip" top={670} h={95} />
      <g clipPath="url(#macd-clip)">
        {macd.map((v, i) => {
          const y = 665 + Math.abs(v) / 3
          return <Bar key={i} i={i} a={y} b={722} color={y < 722 ? GREEN : RED} hollow={v < 0} />
        })}
        <Trace segs={dif} y0={665} color={TEAL} />
        <Trace segs={dea} y0={665} color={ORANGE} />
      </g>
      <AxisLabel x={1413} y={721}>0.0</AxisLabel>
    </PaneSvg>
    <Legend>
      <LegendRow>
        <Collapse />
        <BellLabel><Bell />MACD(12,26,9)</BellLabel>
        <Value $c={TEAL}>DIF:1082.1</Value>
        <Value $c={ORANGE}>DEA:1100.7</Value>
        <Value $c="#f0606c">MACD:-37.2</Value>
      </LegendRow>
    </Legend>
  </Pane>
)

const FundPane = () => (
  <Pane $h={99}>
    <PaneSvg viewBox="5 765 1440 99">
      <Grid top={765} h={99} rows={[765, 772, 863]} />
      <Clip id="fund-clip" top={765} h={99} />
      <g clipPath="url(#fund-clip)">
        {fundflow.map((v, i) => {
          const y = 665 + Math.abs(v) / 3
          return <Bar key={i} i={i} a={y} b={837} color={y < 837 ? GREEN : RED} hollow={v < 0} />
        })}
      </g>
      <AxisLabel x={1413} y={772}>5.00B</AxisLabel>
      <AxisLabel x={1413} y={837}>0</AxisLabel>
    </PaneSvg>
    <Legend>
      <LegendRow>
        <Collapse />
        <span>Fundflow</span>
        <Value $c={TEAL}>Fundflow:242,668,903.6</Value>
      </LegendRow>
    </Legend>
  </Pane>
)

const dateLabels = [
  [120, '4月 14'], [201, '4月 23'], [282, '5月 2'], [362, '5月 11'], [443, '5月 20'], [524, '5月 29'], [686, '6月 16'], [767, '6月 25'],
  [847, '7月 4'], [928, '7月 13'], [1009, '7月 22'], [1090, '7月 31'], [1171, '8月 9'], [1252, '8月 18'], [1332, '8月 27'], [1413, '筹'], [1436, '爆'],
] as const

const DateAxis = () => (
  <Pane $h={19}>
    <PaneSvg viewBox="5 864 1440 19">
      {dateLabels.map(([x, t]) => (
        <AxisLabel key={t} x={x} y={873.5}>{t}</AxisLabel>
      ))}
    </PaneSvg>
  </Pane>
)

const periods = ['1分', '5分', '15分', '45分', '分时', '1时', '4时', '1日', '周K']

const App = () => (
  <Page>
    <GlobalStyle />
    <Gutter $w={5}>
      <Handle $left />
    </Gutter>
    <Main>
      <Tabs>
        <ActiveTab>
          <CoinLogo>
            <svg width="14" height="14" viewBox="0 0 24 24" fill="#f3ba2f">
              <path d="M12 2l3.600 3.600-1.800 1.800L12 5.600 10.200 7.400 8.400 5.600zM5.600 8.400l1.800 1.800L5.600 12l1.800 1.800-1.800 1.800L2 12zM18.400 8.400L22 12l-3.600 3.600-1.800-1.800 1.800-1.800-1.800-1.800zM12 9.800l2.200 2.200-2.200 2.200L9.800 12zM8.400 18.400l1.800-1.800 1.800 1.800 1.800-1.800 1.800 1.800L12 22z" />
            </svg>
          </CoinLogo>
          <TabText>
            <TabName>BTC/USDT永续</TabName>
            <TabPrice>
              <span>72324.1</span>
              <span>-0.57%</span>
            </TabPrice>
          </TabText>
        </ActiveTab>
        <IndexTab>
          <IndexName>恐惧&amp;贪婪指数</IndexName>
          <IndexValue>
            <span>77</span>
            <span>6.94%</span>
          </IndexValue>
        </IndexTab>
        <AddTab>
          <Icon d={glyphs.plus} c="#a9afb9" s={14} />
        </AddTab>
      </Tabs>

      <Toolbar $h={31}>
        <ToolSlot $w={20} $ml={3}><Icon d={glyphs.indicator} s={16} /></ToolSlot>
        <ToolText $dark>指标</ToolText>
        <ToolSlot $w={28} $ml={8}><Icon d={glyphs.calendar} s={16} /></ToolSlot>
        <ToolSlot $w={28}><Icon d={glyphs.layout} s={16} /></ToolSlot>
        <ToolSlot $w={30}><Icon d={glyphs.rewind} s={16} /></ToolSlot>
        <ToolText $dark>周期</ToolText>
        <ToolSlot $w={14} $ml={2}><Icon d={glyphs.chevron} c="#5d6b82" s={12} /></ToolSlot>
        <ToolSlot $w={4} />
        {periods.map(p => (
          <Period key={p} $on={p === '1日'}>{p}</Period>
        ))}
        <Spacer />
        <ToolText>0s</ToolText>
        <ToolSlot $w={28} $ml={9}><Icon d={glyphs.camera} c="#9aa3af" s={16} /></ToolSlot>
        <ToolSlot $w={30}><Icon d={glyphs.pen} c="#3d8bf0" s={16} /></ToolSlot>
        <ToolSlot $w={28}><Icon d={glyphs.frame} c="#7a8492" s={16} /></ToolSlot>
        <ToolSlot $w={30}><Icon d={glyphs.pop} c="#9aa3af" s={16} /></ToolSlot>
        <ToolSlot $w={30}><Icon d={glyphs.hex} c="#8a93a1" s={16} /></ToolSlot>
        <ToolSlot $w={28}><Icon d={glyphs.full} c="#8a93a1" s={15} /></ToolSlot>
        <ToolSep $w={0} />
        <ToolSlot $w={26} $ml={2}><Icon d={glyphs.cloud} c="#a9afb9" s={15} /></ToolSlot>
        <ToolText>未命名</ToolText>
        <ToolSlot $w={14} $ml={1}><Icon d={glyphs.chevron} c="#a9afb9" s={12} /></ToolSlot>
        <AnalysisButton>K线分析</AnalysisButton>
        <ToolSlot $w={30} $ml={0}><Icon d={glyphs.share} c="#3d8bf0" s={16} /></ToolSlot>
        <ToolSlot $w={7} />
      </Toolbar>

      <Toolbar $h={33}>
        {(['trend', 'fib', 'channel', 'hline', 'rect', 'dots'] as const).map(n => (
          <ToolSlot key={n} $w={32}><Icon d={glyphs[n]} /></ToolSlot>
        ))}
        <ToolSep $w={7} />
        <ToolSlot $w={32}><GoldMark>主</GoldMark></ToolSlot>
        <ToolSlot $w={32}><GoldMark>大</GoldMark></ToolSlot>
        <ToolSlot $w={32}><GoldMark>筹</GoldMark></ToolSlot>
        <ToolSlot $w={32}><Icon d={glyphs.cyclePen} /></ToolSlot>
        <ToolSlot $w={32}><Icon d={glyphs.linePin} /></ToolSlot>
        <ToolSep $w={7} />
        <ToolSlot $w={32}><Icon d={glyphs.marks} c="#3d8bf0" /></ToolSlot>
        {(['ruler', 'penWave', 'candles', 'tag', 'note', 'magnet', 'funnel', 'trash'] as const).map(n => (
          <ToolSlot key={n} $w={32}><Icon d={glyphs[n]} /></ToolSlot>
        ))}
      </Toolbar>

      <ChartArea>
        <MainPane />
        <VolumePane />
        <RsiPane />
        <MacdPane />
        <FundPane />
        <DateAxis />
        <CrossV />
        <CrossH />
        <PriceTag $top={46} $h={20} $bg="#f04f5b">72324.1</PriceTag>
        <PriceTag $top={403} $h={20} $bg={SLATE}>742.20k</PriceTag>
        <PriceTag $top={455} $h={18} $bg="#f6b54f">42.8k</PriceTag>
        <PlusBox><Icon d={glyphs.plus} c="#cfd3da" s={13} /></PlusBox>
        <ExpandBox><Icon d={glyphs.corners} c="#a9afb9" s={11} /></ExpandBox>
        <DateTag>2024-06-04 08:00</DateTag>
      </ChartArea>
    </Main>
    <Gutter $w={3}>
      <Handle $left={false} />
    </Gutter>
  </Page>
)

export default App
